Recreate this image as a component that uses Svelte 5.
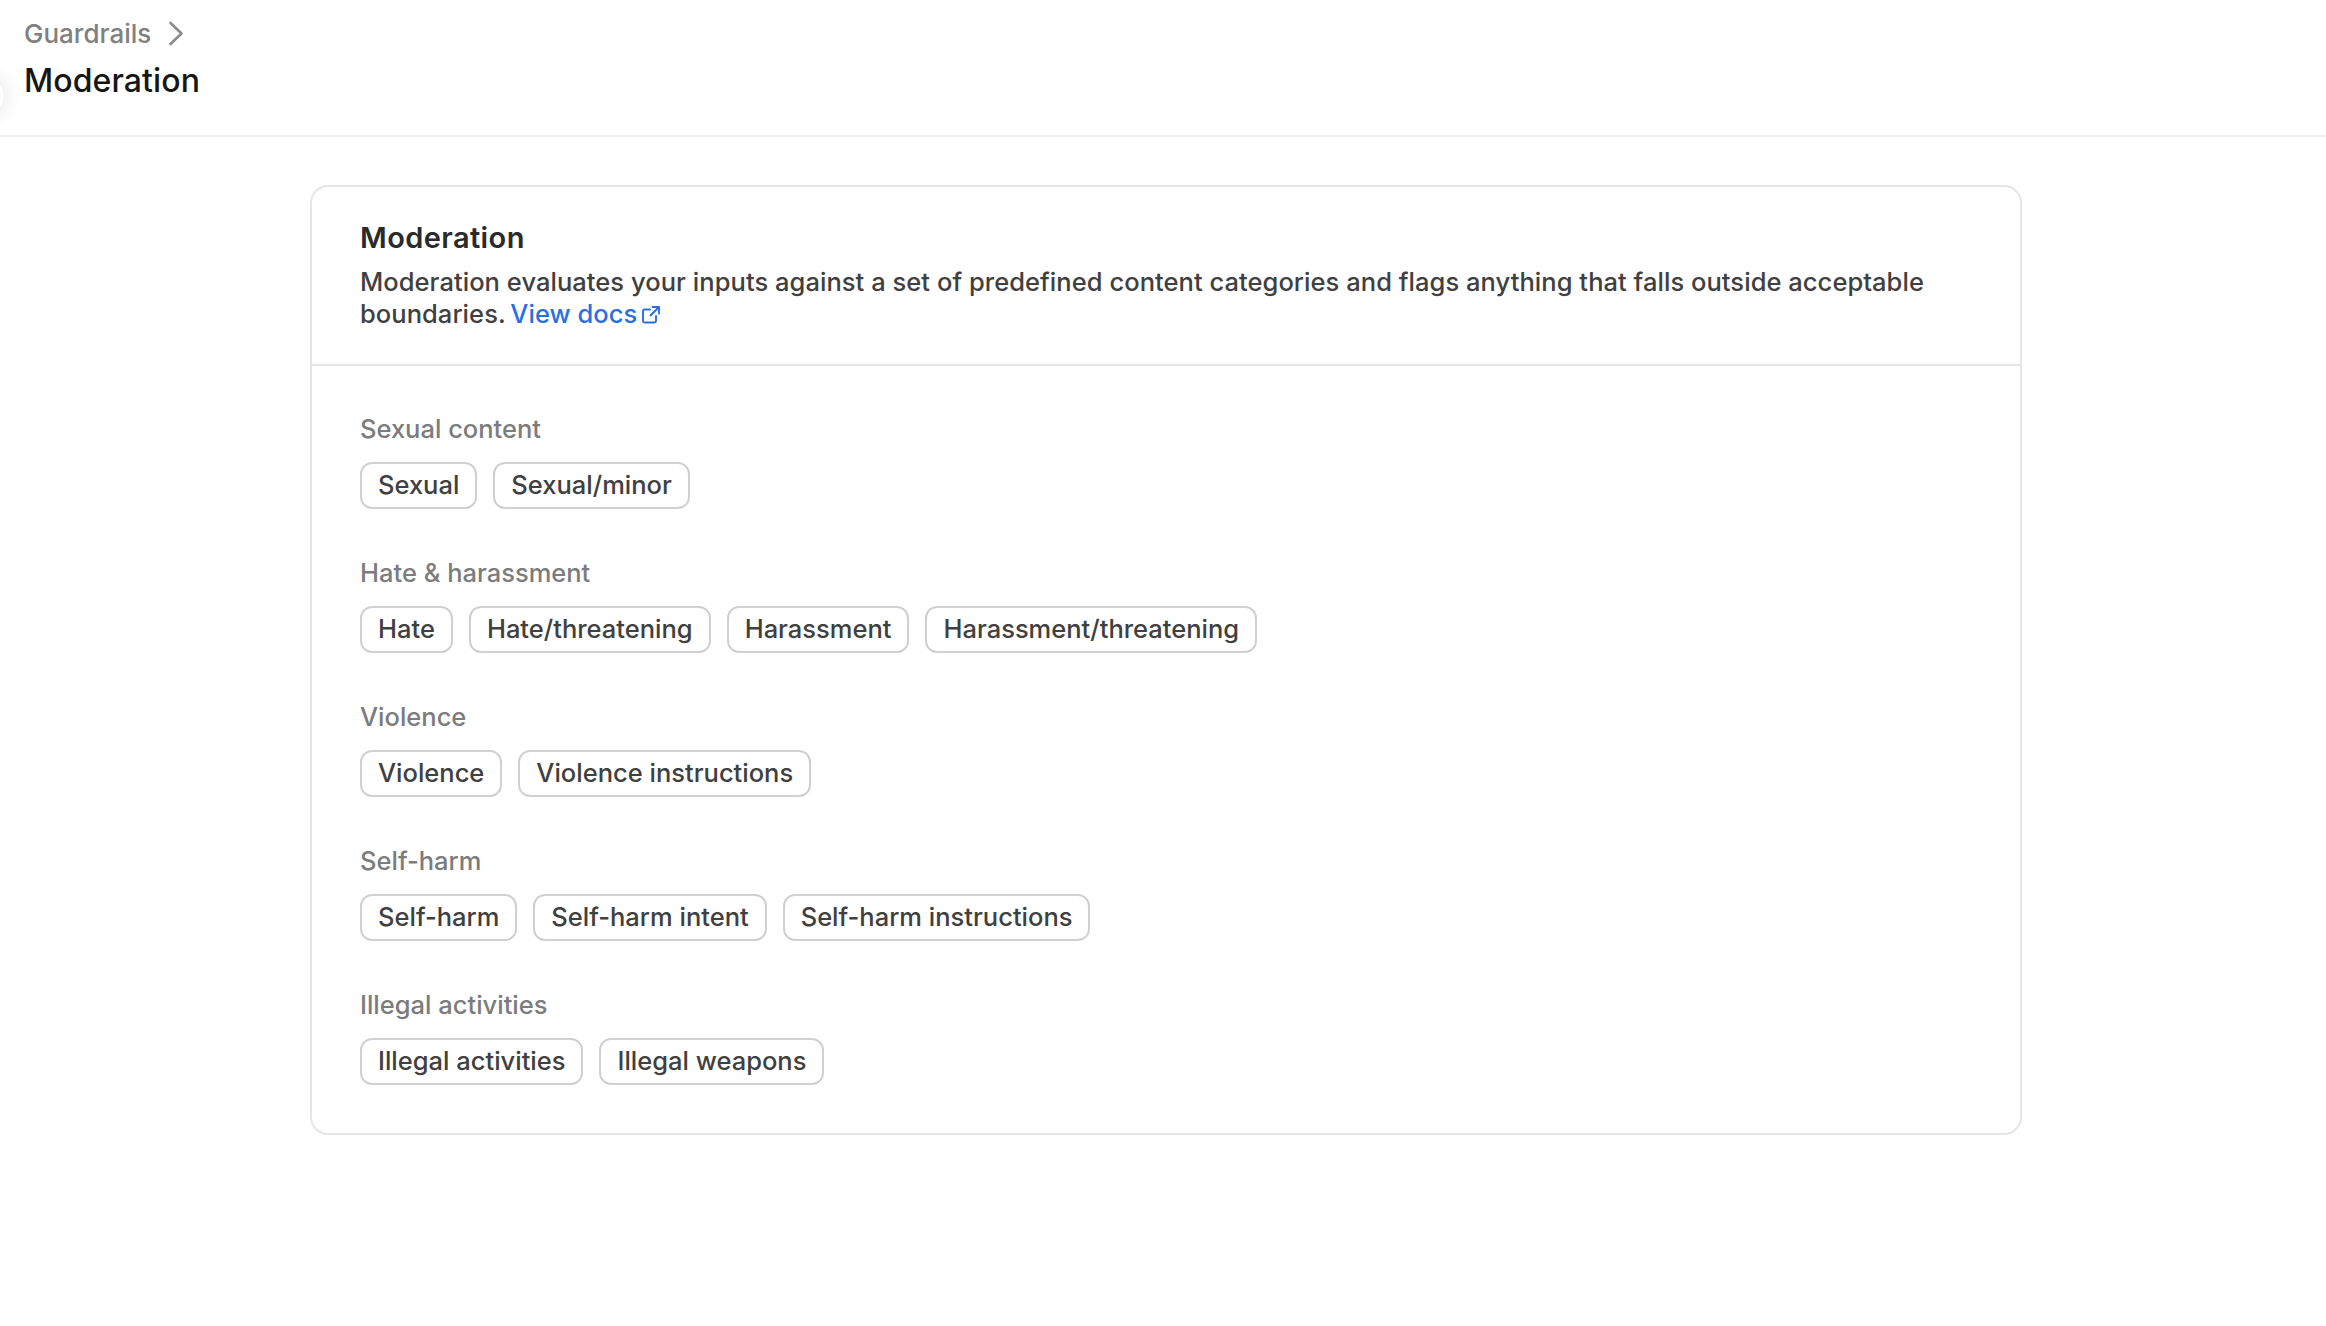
<script lang="ts">
  const groups = [
    { label: "Sexual content", items: ["Sexual", "Sexual/minor"] },
    { label: "Hate & harassment", items: ["Hate", "Hate/threatening", "Harassment", "Harassment/threatening"] },
    { label: "Violence", items: ["Violence", "Violence instructions"] },
    { label: "Self-harm", items: ["Self-harm", "Self-harm intent", "Self-harm instructions"] },
    { label: "Illegal activities", items: ["Illegal activities", "Illegal weapons"] },
  ];
</script>

<div class="page">
  <span class="edge-knob"></span>
  <header class="topbar">
    <nav class="crumbs">
      <span>Guardrails</span>
      <svg width="16" height="26" viewBox="0 0 16 26" fill="none" aria-hidden="true">
        <path d="M2.5 3 L13.5 13.5 L2.5 24" stroke="#8a8a8a" stroke-width="2.6" stroke-linecap="round" stroke-linejoin="round" />
      </svg>
    </nav>
    <h1>Moderation</h1>
  </header>

  <main class="content">
    <section class="card">
      <div class="card-head">
        <h2>Moderation</h2>
        <p>
          Moderation evaluates your inputs against a set of predefined content categories and flags anything that falls outside acceptable boundaries.
          <a href="#docs">View docs<svg class="ext" width="20" height="20" viewBox="0 0 20 20" fill="none" aria-hidden="true">
              <path d="M9 4.5H3.5a1.5 1.5 0 0 0-1.5 1.5v10a1.5 1.5 0 0 0 1.5 1.5h10a1.5 1.5 0 0 0 1.5-1.5V11M11.5 2H18v6.5M18 2 9.5 10.5" stroke="currentColor" stroke-width="1.9" stroke-linecap="round" stroke-linejoin="round" />
            </svg></a>
        </p>
      </div>
      <div class="card-body">
        {#each groups as group}
          <div class="group">
            <div class="group-label">{group.label}</div>
            <div class="chips">
              {#each group.items as item}
                <span class="chip">{item}</span>
              {/each}
            </div>
          </div>
        {/each}
      </div>
    </section>
  </main>
</div>

<style>
  :global(body) {
    background: #fff;
    font-family: "Inter", "Noto Sans", sans-serif;
  }

  .page {
    height: 1326px;
    overflow: hidden;
    position: relative;
  }

  .edge-knob {
    background: #fff;
    border-radius: 50%;
    box-shadow: 0 0 22px rgba(0, 0, 0, 0.13);
    height: 36px;
    left: -32px;
    position: absolute;
    top: 78px;
    width: 36px;
  }

  .topbar {
    border-bottom: 2px solid #f1f1f1;
    box-sizing: border-box;
    height: 137px;
    padding: 17px 24px 0;
  }

  .crumbs {
    align-items: center;
    color: #808080;
    display: flex;
    font-size: 26px;
    font-weight: 500;
    gap: 17px;
    height: 32px;
  }

  h1 {
    color: #161616;
    font-size: 32px;
    font-weight: 500;
    letter-spacing: 0.1px;
    line-height: 40px;
    margin: 12px 0 0;
  }

  .content {
    display: flex;
    justify-content: center;
    padding: 48px 0 0 6px;
  }

  .card {
    border: 2px solid #e6e6e6;
    border-radius: 18px;
    box-sizing: border-box;
    width: 1712px;
  }

  .card-head {
    border-bottom: 2px solid #e6e6e6;
    padding: 33px 48px 34px;
  }

  h2 {
    color: #2b2b2b;
    font-size: 29px;
    font-weight: 600;
    letter-spacing: 0.4px;
    line-height: 36px;
    margin: 0;
  }

  p {
    color: #404040;
    font-size: 25.5px;
    font-weight: 500;
    letter-spacing: 0.05px;
    line-height: 32px;
    margin: 10px 0 0;
  }

  a {
    color: #2a6fe0;
    margin-left: -2px;
    text-decoration: none;
  }

  .ext {
    margin-left: 4px;
    vertical-align: -2px;
  }

  .card-body {
    display: flex;
    flex-direction: column;
    gap: 48px;
    padding: 47px 48px 48px;
  }

  .group-label {
    color: #7c7c7c;
    font-size: 25.5px;
    font-weight: 500;
    line-height: 32px;
  }

  .chips {
    display: flex;
    gap: 16px;
    margin-top: 17px;
  }

  .chip {
    border: 2px solid #d0d0d0;
    border-radius: 12px;
    box-sizing: border-box;
    color: #404040;
    font-size: 25.5px;
    font-weight: 500;
    height: 47px;
    line-height: 42px;
    padding: 0 16px;
  }
</style>
